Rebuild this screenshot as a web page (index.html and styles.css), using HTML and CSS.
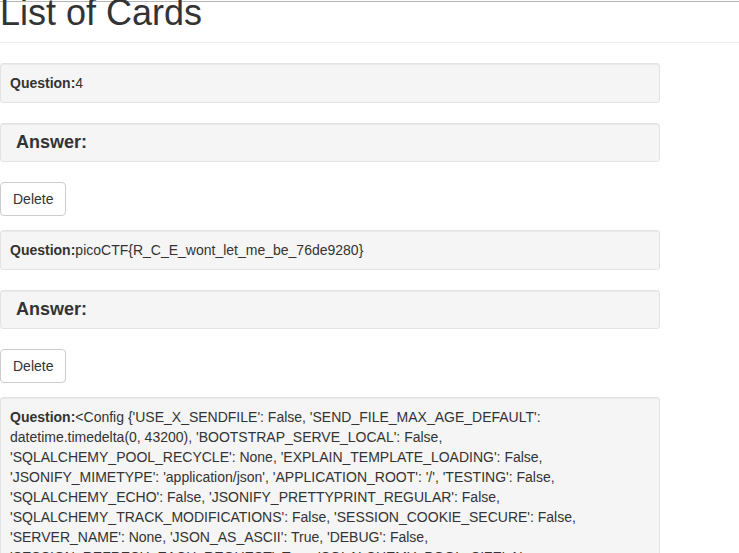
FILE: index.html
```html
<!DOCTYPE html>
<html>
<head>
<meta charset="utf-8">
<title>List of Cards</title>
<link rel="stylesheet" href="styles.css">
</head>
<body>
<div class="topline"></div>
<div class="page">
  <div class="page-header">
    <h1 class="title">List of Cards</h1>
  </div>
  <div class="cards">
    <div class="card">
      <div class="well question"><strong>Question:</strong>4</div>
      <div class="well answer">Answer:</div>
      <button class="btn">Delete</button>
    </div>
    <div class="card">
      <div class="well question"><strong>Question:</strong>picoCTF{R_C_E_wont_let_me_be_76de9280}</div>
      <div class="well answer">Answer:</div>
      <button class="btn">Delete</button>
    </div>
    <div class="card">
      <div class="well question"><strong>Question:</strong>&lt;Config {'USE_X_SENDFILE': False, 'SEND_FILE_MAX_AGE_DEFAULT': datetime.timedelta(0, 43200), 'BOOTSTRAP_SERVE_LOCAL': False, 'SQLALCHEMY_POOL_RECYCLE': None, 'EXPLAIN_TEMPLATE_LOADING': False, 'JSONIFY_MIMETYPE': 'application/json', 'APPLICATION_ROOT': '/', 'TESTING': False, 'SQLALCHEMY_ECHO': False, 'JSONIFY_PRETTYPRINT_REGULAR': False, 'SQLALCHEMY_TRACK_MODIFICATIONS': False, 'SESSION_COOKIE_SECURE': False, 'SERVER_NAME': None, 'JSON_AS_ASCII': True, 'DEBUG': False, 'SESSION_REFRESH_EACH_REQUEST': True, 'SQLALCHEMY_POOL_SIZE': None, 'SESSION_COOKIE_HTTPONLY': True, 'SQLALCHEMY_NATIVE_UNICODE': None, 'PERMANENT_SESSION_LIFETIME': datetime.timedelta(31), 'PREFERRED_URL_SCHEME': 'http', 'MAX_CONTENT_LENGTH': None, 'SQLALCHEMY_DATABASE_URI': 'sqlite://', 'TRAP_BAD_REQUEST_ERRORS': False}&gt;</div>
      <div class="well answer">Answer:</div>
      <button class="btn">Delete</button>
    </div>
  </div>
</div>
</body>
</html>
```

FILE: styles.css
```css
html, body {
  margin: 0;
  padding: 0;
  background: #fff;
}
body {
  font-family: "Liberation Sans", Arial, Helvetica, sans-serif;
  font-size: 14px;
  line-height: 20px;
  color: #333;
  overflow: hidden;
}
.topline {
  height: 1px;
  margin-top: 1px;
  background: #b4b4b4;
}
.page {
  width: 100%;
}
.page-header {
  margin-top: -9px;
  padding-bottom: 9px;
  border-bottom: 1px solid #eee;
  margin-bottom: 20px;
}
.title {
  margin: 0;
  font-size: 36px;
  line-height: 1.1;
  font-weight: normal;
  color: #333;
}
.card {
  display: flex;
  flex-direction: column;
  align-items: flex-start;
  margin-bottom: 14px;
}
.well {
  box-sizing: border-box;
  width: 660px;
  padding: 9px;
  background: #f5f5f5;
  border: 1px solid #e3e3e3;
  border-radius: 3px;
  box-shadow: inset 0 1px 1px rgba(0, 0, 0, 0.05);
  margin-bottom: 20px;
}
.question strong {
  font-weight: bold;
}
.answer {
  padding-left: 15px;
  font-size: 18px;
  font-weight: bold;
  line-height: 19px;
}
.btn {
  font-family: "Liberation Sans", Arial, Helvetica, sans-serif;
  font-size: 14px;
  line-height: 20px;
  color: #333;
  background: #fff;
  border: 1px solid #ccc;
  border-radius: 4px;
  padding: 6px 12px;
  margin: 0;
  cursor: pointer;
}
```
